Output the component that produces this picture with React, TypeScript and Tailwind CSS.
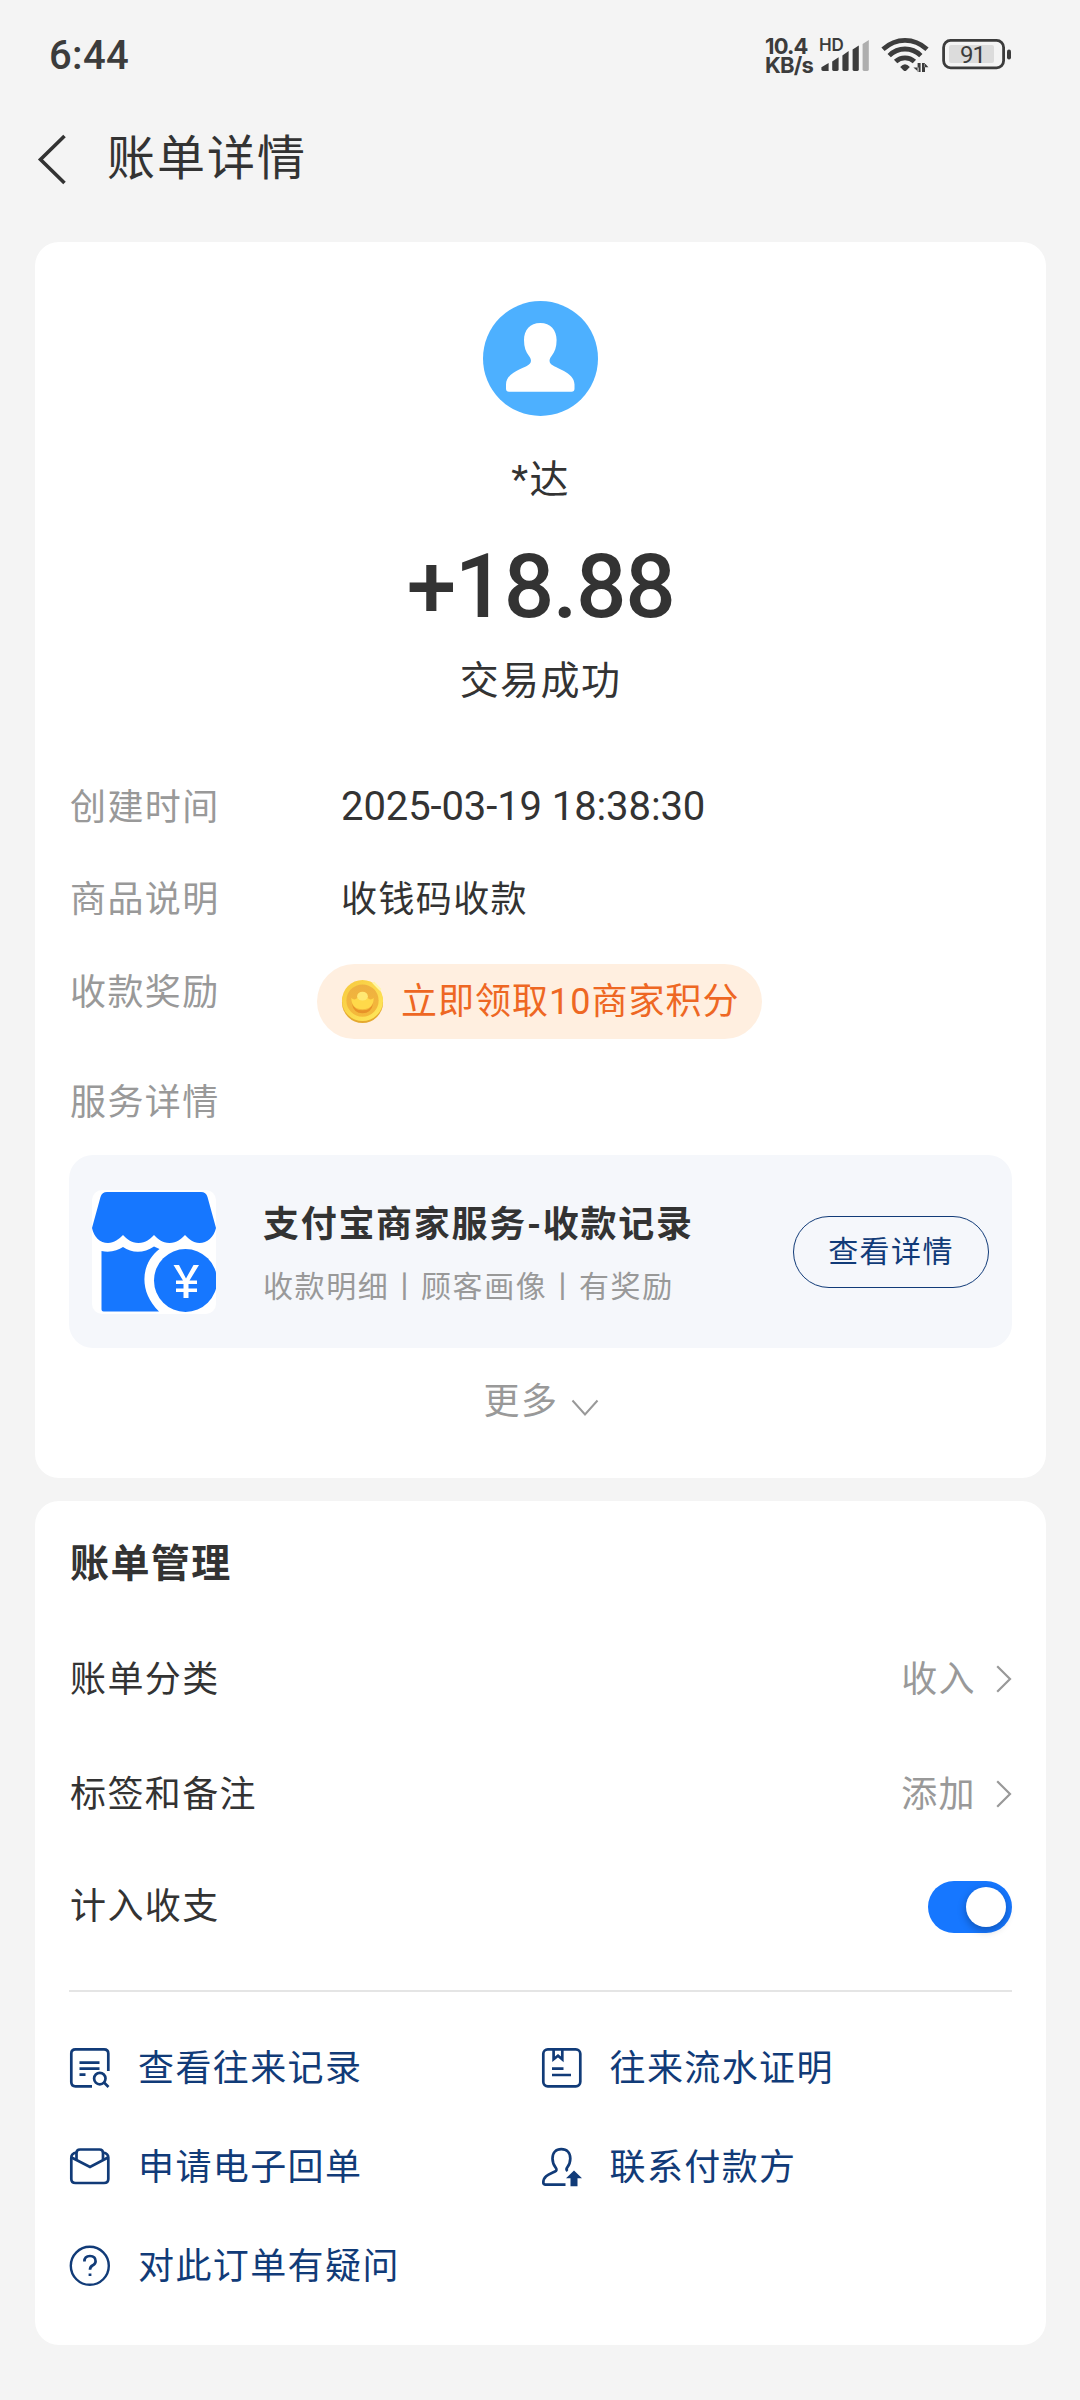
import type { ReactNode } from "react";

const BackIcon = () => (
  <svg width="32" height="52" viewBox="0 0 32 52" fill="none" stroke="#333333" strokeWidth="3.6">
    <path d="M29.5 3L5.500 26.5L29.5 50" />
  </svg>
);

const ChevronRight = () => (
  <svg width="16" height="28" viewBox="0 0 16 28" fill="none" stroke="#999999" strokeWidth="2.2">
    <path d="M1.2 1.2L14 14L1.2 26.8" />
  </svg>
);

const SignalIcon = () => (
  <svg width="50" height="34" viewBox="0 0 50 34" fill="#3c3c3c">
    <path d="M2.400 30.2L9.600 26V34H4Q2.400 34 2.400 32.6Z" />
    <path d="M13.2 24.6L19.6 20.2V32.6Q19.6 34 18.2 34H14.6Q13.2 34 13.2 32.6Z" />
    <path d="M23.4 18.4L29.6 14V32.6Q29.6 34 28.2 34H24.8Q23.4 34 23.4 32.6Z" />
    <path d="M33.6 12.4L39.8 8.4V32.6Q39.8 34 38.4 34H35Q33.6 34 33.6 32.6Z" />
    <path d="M43.6 7L49.8 3V32.6Q49.8 34 48.4 34H45Q43.6 34 43.6 32.6Z" fill="#aeaeae" />
  </svg>
);

const WifiIcon = () => (
  <svg width="48" height="36" viewBox="0 0 48 36" fill="none" stroke="#3c3c3c" strokeWidth="4.8">
    <path d="M2 13.2Q11.8 4.3 24 4.3T46 13.2" />
    <path d="M8.2 19.6Q15 13 24 13T39.8 19.6" />
    <path d="M14.6 25.6Q18.6 21.8 24 21.8T33.4 25.6" />
    <path d="M19.2 31Q24 25.600 28.8 31L25.400 34.500Q24 35.500 22.600 34.500Z" fill="#3c3c3c" stroke="none" />
    <path d="M36.600 27V36H39.6V27ZM32.4 31.6H37.6V36Z" fill="#3c3c3c" stroke="none" />
    <path d="M41 27V36H44V27ZM43.6 27L47.4 31.2H43.6Z" fill="#3c3c3c" stroke="none" />
  </svg>
);

const BatteryIcon = () => (
  <svg width="70" height="32" viewBox="0 0 70 32">
    <rect x="1.6" y="2.4" width="60" height="27.4" rx="7" fill="none" stroke="#3c3c3c" strokeWidth="2.8" />
    <rect x="7" y="7" width="45" height="18" rx="2" fill="#dcdcdc" />
    <rect x="65" y="11.4" width="4" height="10" rx="2" fill="#3c3c3c" />
    <text
      x="30.500"
      y="24.6"
      fontSize="24"
      textAnchor="middle"
      fill="#3c3c3c"
      className="font-['Roboto',sans-serif] tracking-[-1px]"
    >
      91
    </text>
  </svg>
);

const Avatar = () => (
  <svg width="115" height="115" viewBox="0 0 115 115">
    <circle cx="57.5" cy="57.5" r="57.5" fill="#4db0ff" />
    <path
      d="M57.3 22C67.5 22 73.6 29 73.6 39C73.6 46 71.8 51 68.6 55C66.2 58 66 60.500 67.500 62.500C71.500 67.500 91.500 70.500 91.500 83.500V87.800Q91.500 90.800 88.500 90.800H26Q23 90.800 23 87.800V83.500C23 70.500 43 67.500 47 62.500C48.500 60.500 48.300 58 46 55C42.800 51 41 46 41 39C41 29 47 22 57.300 22Z"
      fill="#ffffff"
    />
  </svg>
);

const CoinIcon = () => (
  <svg width="43" height="45" viewBox="0 0 44 46">
    <defs>
      <linearGradient id="coin-face" x1="0" y1="0" x2="0" y2="1">
        <stop offset="0" stopColor="#eeb040" />
        <stop offset="1" stopColor="#f5b93a" />
      </linearGradient>
      <linearGradient id="coin-rim" x1="0" y1="0" x2="1" y2="1">
        <stop offset="0" stopColor="#f7c83e" />
        <stop offset="1" stopColor="#ffe95c" />
      </linearGradient>
    </defs>
    <circle cx="22" cy="24" r="21" fill="#e5a92f" />
    <circle cx="22" cy="22" r="21" fill="url(#coin-rim)" />
    <circle cx="22" cy="22" r="16.500" fill="url(#coin-face)" />
    <path d="M11 25Q13 35 22 35T33 25Q30 32 22 32T11 25Z" fill="#e89228" />
    <path d="M10.500 19.500Q14 22.500 17 19Q22 9 27 19Q30 22.500 33.500 19.500Q33 31 22 31T10.500 19.500Z" fill="#ffd94a" />
    <ellipse cx="22" cy="17.500" rx="5.500" ry="4.500" fill="#ffe873" />
    <path d="M33 3.500L40.500 11" stroke="#fff6a8" strokeWidth="2.500" />
  </svg>
);

const ShopIcon = () => (
  <svg width="124" height="124" viewBox="0 0 124 124">
    <rect width="124" height="124" rx="10" fill="#ffffff" />
    <path
      d="M15 2H109Q114 2 115.500 7L124 38C122 47 115 53 107.500 53C101 53 97 49 93 45C89 49 85 53 77.500 53C70 53 66 49 62 45C58 49 54 53 46.500 53C39 53 35 49 31 45C27 49 22 53 16 53C8 53 2 47 0 38L8.500 7Q10 2 15 2Z"
      fill="#1677ff"
    />
    <path
      d="M9.500 61C18 63 26 60.500 31 57C40 63.500 52 63.500 62 56.500L67.500 59C49 73 46 101 67 121.500H11.500Q9.500 121.500 9.500 119.500Z"
      fill="#1677ff"
    />
    <circle cx="93.500" cy="90.500" r="31.500" fill="#1677ff" />
    <path
      d="M81.500 75H87L94 88.500L101.500 75H107L97.500 90.500H105V94H96.500V98.500H105V102H96.500V108H91.500V102H84V98.500H91.500V94H84V90.500H91Z"
      fill="#ffffff"
    />
  </svg>
);

const iconProps = {
  width: 42,
  height: 42,
  viewBox: "0 0 42 42",
  fill: "none",
  stroke: "#113b78",
  strokeWidth: 2.7,
};

const RecordIcon = () => (
  <svg {...iconProps}>
    <path d="M39.300 24V6.500Q39.300 2.300 35 2.300H6.500Q2.300 2.300 2.300 6.500V35Q2.300 39.300 6.500 39.300H23" />
    <path d="M10.500 15.600H30.500M10.500 21.700H30.500M10.500 27.600H16.500" />
    <circle cx="30.800" cy="31.600" r="5.700" />
    <path d="M35 35.500L39.500 40" />
  </svg>
);

const ProofIcon = () => (
  <svg {...iconProps}>
    <rect x="2.300" y="2.300" width="37" height="37" rx="4.500" />
    <path d="M12.600 2.500V12.300L17 8.800L21.300 12.300V2.500" />
    <path d="M11 21.700H22.500M11 28H30" />
  </svg>
);

const ReceiptIcon = () => (
  <svg {...iconProps}>
    <path d="M7.500 6.500Q2.300 7.500 2.300 11.500V33Q2.300 37 6.500 37H35Q39.300 37 39.300 33V11.500Q39.300 7.500 34 6.500" />
    <path d="M7.500 13.500V7Q7.500 3.500 11 3.500H30.500Q34 3.500 34 7V13.500" />
    <path d="M2.600 11.500L21 21L39 11.500" />
  </svg>
);

const ContactIcon = () => (
  <svg {...iconProps}>
    <path d="M24.500 38.600H4.500Q2.300 38.600 2.300 36.500C2.300 29.500 9 28 14 25.500Q16.500 24.200 14.800 21.800C12.300 18.800 11.500 16 11.500 12.500C11.500 6.500 15 3.200 20.300 3.200C25.800 3.200 29.300 6.500 29.300 12.500C29.300 16 28.500 18.800 26 21.800Q24.800 23.800 26.600 25" />
    <path d="M33 24.500L41 32.300H36.500V40.300H29.500V32.300H25Z" fill="#113b78" stroke="none" />
  </svg>
);

const QuestionIcon = () => (
  <svg {...iconProps}>
    <circle cx="20.800" cy="20.800" r="19" strokeWidth="2.400" />
    <path d="M15.400 16.500Q15.400 11 21 11T26.600 16.200Q26.600 18.700 23.800 20.300Q21 21.800 21 24.800" />
    <path d="M19.600 28.500H22.400V31H19.600Z" fill="#113b78" stroke="none" />
  </svg>
);

const DetailRow = ({ label, children }: { label: string; children: ReactNode }) => (
  <div className="flex h-[92px] items-center pt-[3px] pl-px">
    <span className="w-[271px] text-[#999999]">{label}</span>
    <span>{children}</span>
  </div>
);

const SettingRow = ({ label, value }: { label: string; value: string }) => (
  <div className="flex h-[115px] items-center justify-between pl-px">
    <span className="pt-[3px]">{label}</span>
    <div className="flex items-center gap-[20px] text-[#999999]">
      <span className="pt-[3px]">{value}</span>
      <ChevronRight />
    </div>
  </div>
);

const actions = [
  { label: "查看往来记录", icon: <RecordIcon /> },
  { label: "往来流水证明", icon: <ProofIcon /> },
  { label: "申请电子回单", icon: <ReceiptIcon /> },
  { label: "联系付款方", icon: <ContactIcon /> },
  { label: "对此订单有疑问", icon: <QuestionIcon /> },
];

const App = () => {
  return (
    <div className="h-[2400px] w-[1080px] bg-[#f4f4f4] pr-[34px] pl-[35px] font-['Roboto','Noto_Sans_CJK_SC',sans-serif] text-[36px] leading-[48px] tracking-[1.4px] text-[#333333]">
      {/* Status bar */}
      <div className="flex h-[108px] items-center justify-between pr-[34px] pl-[14px]">
        <span className="pt-[3px] text-[40px] font-medium tracking-[0.3px] text-[#3c3c3c]">6:44</span>
        <div className="flex items-center">
          <div className="w-[54px] pt-1 font-['Inter',sans-serif] text-[22px] leading-[19px] font-bold tracking-[-0.8px] text-[#3c3c3c]">
            <div>10.4</div>
            <div>KB/s</div>
          </div>
          <div className="relative">
            <SignalIcon />
            <span className="absolute top-[-1px] left-0 font-['Inter',sans-serif] text-[17px] leading-[18px] font-semibold tracking-[-0.2px] text-[#3c3c3c]">
              HD
            </span>
          </div>
          <div className="ml-[12px]">
            <WifiIcon />
          </div>
          <div className="ml-[13px]">
            <BatteryIcon />
          </div>
        </div>
      </div>

      {/* Title bar */}
      <div className="flex h-24 items-center">
        <div className="mt-1.5 w-[72px]">
          <BackIcon />
        </div>
        <h1 className="pt-1.5 text-[48px] tracking-[2px]">账单详情</h1>
      </div>

      {/* Bill details */}
      <section className="mt-[38px] rounded-[24px] bg-white px-[34px] pt-[59px] pb-[53px]">
        <div className="flex flex-col items-center">
          <Avatar />
          <p className="mt-[40px] text-[39px]">*达</p>
          <p className="mt-[33px] text-[89px] leading-[100px] font-medium tracking-[-1.5px]">+18.88</p>
          <p className="mt-[20px] text-[39px]">交易成功</p>
        </div>

        <div className="mt-[55px]">
          <DetailRow label="创建时间">
            <span className="text-[40px] tracking-[-0.1px]">2025-03-19 18:38:30</span>
          </DetailRow>
          <DetailRow label="商品说明">收钱码收款</DetailRow>
          <div className="flex h-[95px] items-end">
            <span className="w-[248px] self-center pt-[3px] pl-px text-[#999999]">收款奖励</span>
            <div className="flex h-[75px] w-[445px] items-center gap-[17px] rounded-full bg-[#ffefe0] pl-6 text-[#ee6723]">
              <CoinIcon />
              <span className="whitespace-nowrap tracking-[1px]">立即领取10商家积分</span>
            </div>
          </div>
        </div>

        <p className="mt-[40px] pl-px text-[#999999]">服务详情</p>
        <div className="mt-[28px] flex h-[193px] items-center rounded-[24px] bg-[#f5f7fb] px-[23px]">
          <ShopIcon />
          <div className="ml-[47px] flex-1 pt-[9px]">
            <p className="font-bold tracking-[1.7px]">支付宝商家服务-收款记录</p>
            <p className="mt-3.5 text-[30px] tracking-[1.6px] text-[#999999]">收款明细丨顾客画像丨有奖励</p>
          </div>
          <button className="h-[72px] w-[196px] rounded-full border-[1.5px] border-[#113b78] pt-px text-[30px] text-[#113b78]">
            查看详情
          </button>
        </div>

        <div className="mt-[31px] flex h-[46px] items-center justify-center gap-[13px] pl-0.5 text-[#999999]">
          <span>更多</span>
          <svg width="28" height="18" viewBox="0 0 28 18" fill="none" stroke="#999999" strokeWidth="2" className="mt-3">
            <path d="M1.500 1.500L14 15.500L26.500 1.500" />
          </svg>
        </div>
      </section>

      {/* Bill management */}
      <section className="mt-[23px] rounded-[24px] bg-white px-[34px] pt-[39px] pb-[30px]">
        <h2 className="pl-px text-[39px] font-bold">账单管理</h2>
        <div className="mt-[33px]">
          <SettingRow label="账单分类" value="收入" />
          <SettingRow label="标签和备注" value="添加" />
          <div className="flex h-[109px] items-center justify-between pl-px">
            <span className="pt-[3px]">计入收支</span>
            <div className="mt-0.5 flex h-[52px] w-[84px] items-center justify-end rounded-full bg-[#1677ff] pr-1.5">
              <div className="size-10 rounded-full bg-white shadow-[0_3px_8px_rgba(0,0,0,0.3)]" />
            </div>
          </div>
        </div>

        <div className="mt-[30px] h-[2px] bg-[#e5e5e5]" />

        <div className="mt-[26px] grid grid-cols-2 text-[#113b78]">
          {actions.map((action) => (
            <div key={action.label} className="flex h-[99px] items-center gap-[27px]">
              {action.icon}
              <span className="pt-[3px]">{action.label}</span>
            </div>
          ))}
        </div>
      </section>
    </div>
  );
};

export default App;
